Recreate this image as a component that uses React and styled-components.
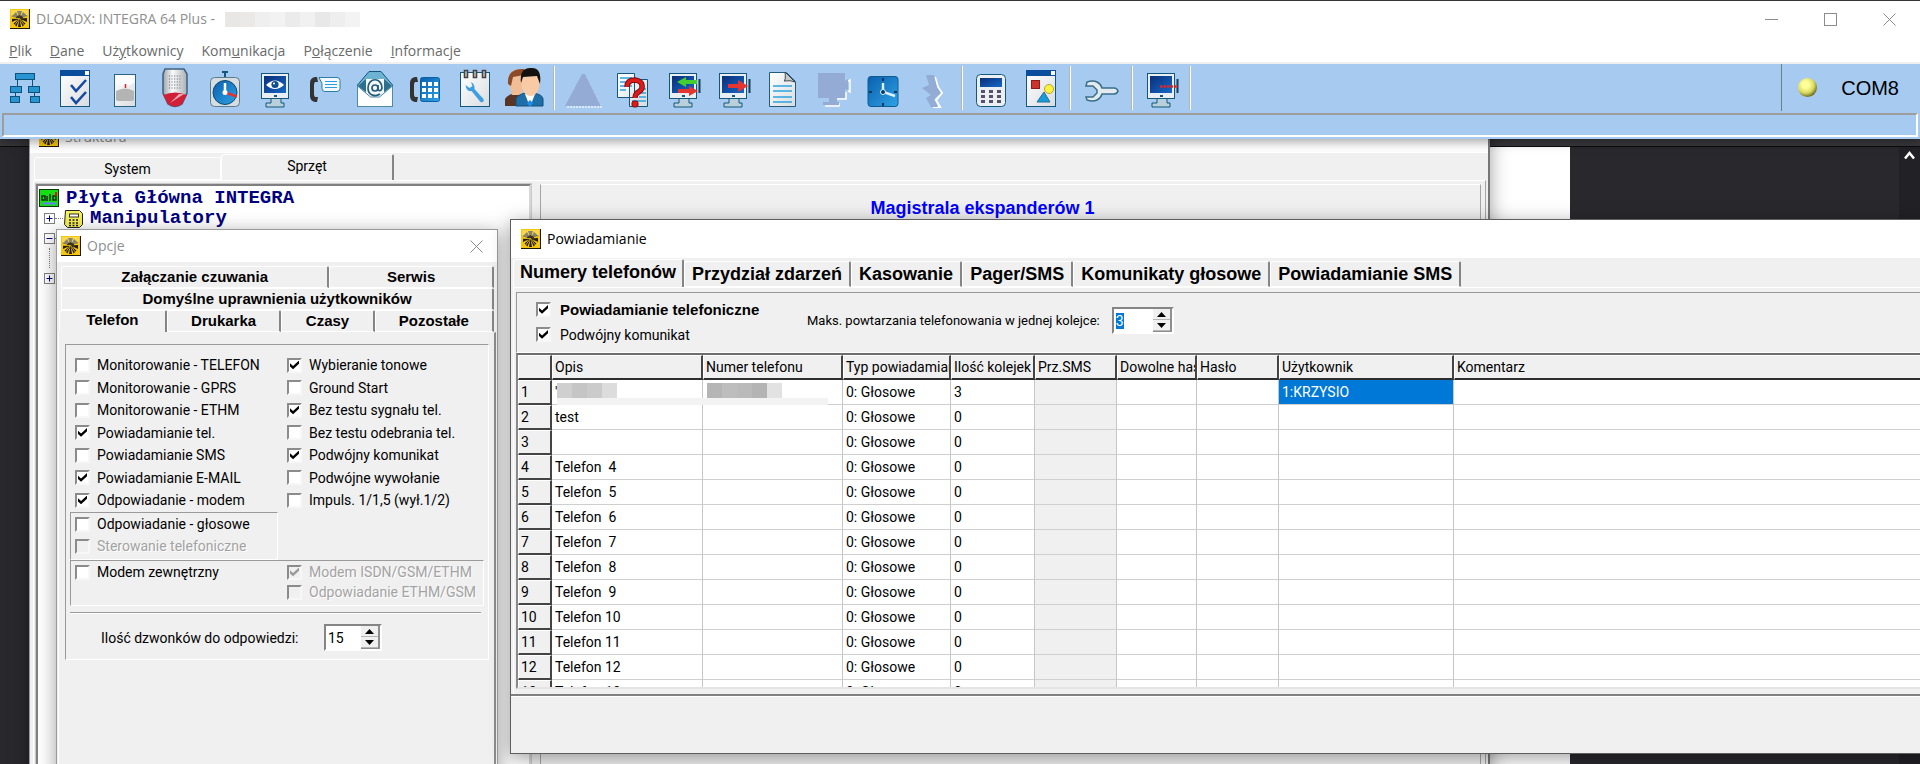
import React, { useState, useEffect, useRef } from "react";
import styled, { createGlobalStyle, css } from "styled-components";

const GlobalStyle = createGlobalStyle`
  * {
    box-sizing: border-box;
  }

  html, body, #root {
    height: 100%;
  }

  body {
    margin: 0;
    overflow: hidden;
    background: #29282d;
    color: #000;
    font: 14px/20px Roboto, "Liberation Sans", sans-serif;
  }

  button, input {
    font: inherit;
    color: inherit;
  }
`;

const uiFont = '"Open Sans", "Noto Sans", sans-serif';
const boldFont = '"Liberation Sans", Arial, sans-serif';

const sunken = css`
  border: 1px solid;
  border-color: #9a9a9a #fff #fff #9a9a9a;
`;

const Desktop = styled.div`
  position: relative;
  display: flex;
  flex-direction: column;
  height: 100%;
  overflow: hidden;
`;

/* main program bar */

const MainBar = styled.header`
  position: relative;
  z-index: 2;
  background: #fff;
  border-top: 1px solid #39343a;
  box-shadow: 0 3px 10px rgba(0, 0, 0, 0.35);
`;

const MainTitle = styled.div`
  display: flex;
  align-items: center;
  height: 36px;
  padding: 0 18px 0 10px;
  color: #8f8f8f;
  font: 14px/20px ${uiFont};
`;

const TitleText = styled.span`
  margin-left: 6px;
`;

const Mosaic = styled.span`
  display: inline-flex;
  flex: none;
  margin-left: ${(p) => p.$gap || 0}px;
`;

const MosaicBlock = styled.span`
  width: 15px;
  height: 15px;
  background: ${(p) => p.$color};
`;

const WindowButtons = styled.div`
  display: flex;
  gap: 34px;
  margin-left: auto;
`;

const GlyphButton = styled.button`
  display: flex;
  align-items: center;
  justify-content: center;
  width: 25px;
  height: 25px;
  padding: 0;
  border: 0;
  background: none;
`;

const Menu = styled.nav`
  display: flex;
  height: 27px;
  border-bottom: 2px solid #f0f0f0;
  font: 14px/28px ${uiFont};
`;

const MenuLink = styled.a`
  padding: 0 9px;
  color: #6a6a6a;
  text-decoration: none;
`;

const Toolbar = styled.div`
  display: flex;
  height: 49px;
  background: #a6caf0;
`;

const ToolButton = styled.button`
  display: flex;
  justify-content: center;
  width: ${(p) => (p.$wide ? 54 : 50)}px;
  height: 48px;
  padding: 0;
  border: 0;
  background: none;
`;

const ToolDivider = styled.span`
  width: 2px;
  height: 44px;
  margin: 2px 3px;
  background: #b5b5b5;
  border-right: 1px solid #fff;
`;

const PortPanel = styled.div`
  display: flex;
  align-items: center;
  gap: 24px;
  height: 47px;
  margin-left: auto;
  padding: 0 21px 0 16px;
  border-left: 1px solid #6f7f92;
  font: 20px/24px ${boldFont};
`;

const Lamp = styled.span`
  width: 19px;
  height: 19px;
  border-radius: 50%;
  background: radial-gradient(circle at 40% 35%, #ffff9a 20%, #d8d860 50%, #5c5c14 78%);
`;

const StatusBar = styled.div`
  height: 26px;
  padding: 0 2px 2px;
  background: #a6caf0;
`;

const StatusWell = styled.div`
  height: 24px;
  border: 2px solid;
  border-color: #9d9d9d #fff #fff #9d9d9d;
`;

/* dark editor behind the windows */

const Backdrop = styled.div`
  display: grid;
  grid-template-columns: 30px 1540px 1fr 21px;
  flex: 1;
  border-top: 7px solid #38373c;
`;

const BackdropCell = styled.div`
  border-top: 1px solid #0b0b0c;
  background: ${(p) => p.$color};
`;

const ScrollUp = styled.button`
  display: flex;
  justify-content: center;
  width: 21px;
  height: 21px;
  padding: 4px 0 0;
  border: 0;
  background: none;
`;

/* windows */

const Window = styled.section`
  position: absolute;
  display: flex;
  flex-direction: column;
  background: #f0f0f0;
  border: 1px solid ${(p) => p.$edge || "#9b9b9b"};
  box-shadow: 0 4px 18px rgba(0, 0, 0, 0.38);
`;

const StructureWindow = styled(Window)`
  top: 119px;
  left: 29px;
  right: 430px;
  bottom: -20px;
  border-right: 2px solid #777;
`;

const OptionsWindow = styled(Window)`
  top: 229px;
  left: 56px;
  width: 442px;
  bottom: -20px;
`;

const NotifyWindow = styled(Window)`
  top: 219px;
  left: 510px;
  right: -20px;
  bottom: 10px;
`;

const WindowTitle = styled.div`
  display: flex;
  align-items: center;
  flex: none;
  height: ${(p) => p.$height}px;
  padding: 0 ${(p) => p.$side + 4}px 0 ${(p) => p.$side}px;
  background: #fff;
  color: ${(p) => (p.$active ? "#000" : "#8f8f8f")};
  font: 14px/20px ${uiFont};
`;

const TabRow = styled.div`
  display: flex;
  flex: none;
  align-items: flex-end;
  padding: ${(p) => p.$pad || "0"};
`;

const Tab = styled.button`
  flex: ${(p) => (p.$span ? `${p.$span} 1 0` : "none")};
  height: ${(p) => p.$height || 22}px;
  padding: 0 ${(p) => p.$side || 0}px ${(p) => (p.$active ? 4 : 0)}px;
  border: 1px solid;
  border-width: 1px ${(p) => (p.$soft ? 1 : 2)}px ${(p) => (p.$active ? 0 : 1)}px 1px;
  border-color: #fff ${(p) => (p.$soft ? "#fff" : "#858585")} #fff #fff;
  border-radius: 3px 2px 0 0;
  background: #f0f0f0;
  font: ${(p) => p.$font};
  white-space: nowrap;
`;

const TabFill = styled.span`
  flex: 1100 1 0;
`;

const plainTab = "14px/18px Roboto, sans-serif";
const optionTab = `bold 15px/18px ${boldFont}`;
const notifyTab = `bold 18px/22px ${boldFont}`;

const StructurePage = styled.div`
  display: flex;
  flex: 1;
  gap: 9px;
  margin: 0 2px 0 3px;
  padding: 3px 4px 0 2px;
  border: 1px solid;
  border-color: #fff #a5a5a5 #fff #fff;
`;

const Tree = styled.div`
  width: 495px;
  padding: 2px 0 0 1px;
  background: #fff;
  border: 2px solid;
  border-color: #808080 #d8d8d8 #fff #808080;
  outline: 1px solid #c9c9c9;
  color: #000080;
  font: bold 19px/20px "Liberation Mono", "Courier New", monospace;
`;

const TreeRow = styled.div`
  display: flex;
  align-items: center;
  height: 20px;
  padding-left: ${(p) => (p.$root ? 0 : 5)}px;
`;

const TreeLabel = styled.span`
  margin-left: 7px;
`;

const TreeLink = styled.span`
  width: 8px;
  border-top: 1px dotted #808080;
`;

const TreeStem = styled.span`
  width: 9px;
  height: 20px;
  border-left: 1px dotted #808080;
  margin-left: 5px;
`;

const BusPanel = styled.div`
  flex: 1;
  padding-top: 12px;
  border: 1px solid;
  border-color: #fff #a5a5a5 #fff #a5a5a5;
  color: #0000ff;
  font: bold 18px/22px ${boldFont};
  text-align: center;
`;

const BusTitle = styled.h2`
  margin: 0 56px 0 0;
  font: inherit;
`;

/* options form */

const OptionsPage = styled.div`
  flex: 1;
  margin: 0 1px;
  padding: 11px 5px 0 6px;
  border: 1px solid;
  border-color: transparent #8c8c8c #fff #fff;
  border-right-width: 2px;
`;

const OptionsBox = styled.div`
  ${sunken}
  padding: 9px 4px 8px;
`;

const Columns = styled.div`
  display: grid;
  grid-template-columns: 212px 1fr;
  padding-left: 5px;
`;

const Column = styled.div`
  display: flex;
  flex-direction: column;
  justify-content: space-between;
  height: 157px;
`;

const Field = styled.label`
  display: flex;
  align-items: center;
  gap: ${(p) => p.$gap || 7}px;
  height: ${(p) => p.$height || 22}px;
  color: ${(p) => (p.$disabled ? "#a3a3a3" : "#000")};
  text-shadow: ${(p) => (p.$disabled ? "1px 1px 0 #fff" : "none")};
  font: ${(p) => (p.$bold ? `bold 15px/20px ${boldFont}` : "inherit")};
  white-space: nowrap;
`;

const Tick = styled.input.attrs({ type: "checkbox" })`
  appearance: none;
  flex: none;
  width: 15px;
  height: 15px;
  margin: 0;
  border: 2px solid;
  border-color: #8b8b8b #f7f7f7 #f7f7f7 #8b8b8b;
  background: #fff;

  &:disabled {
    background: #f0f0f0;
  }

  &:checked::before {
    content: "";
    display: block;
    width: 9px;
    height: 9px;
    margin: 1px;
    background: #000;
    clip-path: polygon(0 30%, 34% 62%, 100% 0, 100% 36%, 34% 98%, 0 66%);
  }

  &:checked:disabled::before {
    background: #9a9a9a;
  }
`;

const VoiceGroup = styled.div`
  ${sunken}
  width: 208px;
  height: 48px;
  margin-top: 1px;
  padding: 0 4px;
`;

const ModemGroup = styled.div`
  ${sunken}
  display: grid;
  grid-template-columns: 212px 1fr;
  height: 46px;
  padding: 0 4px;
`;

const Rule = styled.hr`
  height: 2px;
  margin: 6px 3px 10px 0;
  border: 0;
  border-top: 1px solid #9a9a9a;
  border-bottom: 1px solid #fff;
`;

const RingRow = styled.div`
  display: flex;
  align-items: center;
  justify-content: space-between;
  padding: 0 102px 0 31px;
`;

const SpinBox = styled.span`
  display: inline-flex;
  width: ${(p) => p.$width}px;
  height: 27px;
  border: 2px solid;
  border-color: #858585 #fff #fff #858585;
  background: #fff;
`;

const SpinInput = styled.input`
  flex: 1;
  min-width: 0;
  padding: 0 2px;
  border: 0;
  outline: 0;
  background: none;
  font-size: 14px;
  line-height: 16px;

  &::selection {
    background: #0078d7;
    color: #fff;
  }
`;

const SpinButtons = styled.span`
  display: flex;
  flex-direction: column;
  width: 19px;
  border-right: 2px solid #8f8f8f;
  border-bottom: 1px solid #8f8f8f;
`;

const SpinButton = styled.button`
  display: flex;
  align-items: center;
  justify-content: center;
  flex: 1;
  padding: 0;
  border: 0;
  border-bottom: 1px solid #b5b5b5;
  background: #f0f0f0;
`;

/* notification sheet */

const NotifyPage = styled.div`
  display: flex;
  flex-direction: column;
  flex: 1;
  min-height: 0;
  margin-left: 2px;
  padding: 4px 0 5px 2px;
  border-top: 1px solid #fff;
  border-left: 1px solid #fff;
`;

const NotifyTop = styled.div`
  ${sunken}
  display: flex;
  flex: none;
  align-items: flex-start;
  height: 61px;
  padding: 4px 19px 0;
`;

const NotifyChecks = styled.div`
  display: flex;
  flex-direction: column;
  width: 271px;
`;

const RepeatField = styled.label`
  display: flex;
  align-items: center;
  gap: 12px;
  margin-top: 10px;
  font-size: 13px;
  white-space: nowrap;
`;

const TableFrame = styled.div`
  flex: 1;
  min-height: 0;
  overflow: hidden;
  border: 2px solid;
  border-color: #6e6e6e #fff #e4e4e4 #8a8a8a;
  background: #fff;
`;

const PhoneTable = styled.table`
  width: 100%;
  table-layout: fixed;
  border-collapse: separate;
  border-spacing: 0;
`;

const HeadCell = styled.th`
  height: 25px;
  padding: 0 0 0 2px;
  overflow: hidden;
  background: #f0f0f0;
  border: 1px solid;
  border-width: 1px 2px 2px 1px;
  border-color: #fff #444 #2e2e2e #fff;
  font-weight: normal;
  line-height: 20px;
  text-align: left;
  white-space: nowrap;
`;

const RowHead = styled(HeadCell)`
  border-bottom-color: #444;
`;

const Cell = styled.td`
  position: relative;
  height: 25px;
  padding: 0 0 1px 3px;
  background: ${(p) => (p.$selected ? "#0078d7" : p.$locked ? "#f0f0f0" : "#fff")};
  color: ${(p) => (p.$selected ? "#fff" : "#000")};
  border-right: 1px solid #c6c6c6;
  border-bottom: 1px solid #cfcfcf;
  line-height: 20px;
  white-space: pre;
`;

const CellCover = styled.span`
  position: absolute;
  z-index: 1;
  top: 3px;
  left: ${(p) => p.$left}px;
  display: flex;
`;

const CoverStrip = styled.span`
  position: absolute;
  z-index: 1;
  top: 18px;
  left: 5px;
  width: 271px;
  height: 7px;
  background: #f3f3f3;
`;

const Footer = styled.footer`
  flex: none;
  height: 59px;
  border-top: 2px solid #808080;
  box-shadow: inset 0 1px 0 #fff;
`;

const AppLogo = () => (
  <svg width="20" height="20" viewBox="0 0 20 20">
    <rect width="20" height="20" fill="#1c1600" />
    <rect width="19" height="19" fill="#f6c50d" />
    <rect x="1" y="1" width="17" height="5" fill="#f9d84e" />
    <path d="M9.500 9.500L7 2h5zM9.500 9.500l-8-2L6 3zM9.500 9.500L13 3l4.500 4z" fill="#88826a" />
    <path d="M9.500 9.500L2 9v4zM9.500 9.500L17 9v4zM9.500 9.500l-6 5 3 3zM9.500 9.500l6 5-3 3zM9.500 9.500L8 18h3z" fill="#221d0c" />
    <path d="M6 8l3.500-2L13 8v3l-3.500 2L6 11z" fill="#3b3521" />
    <path d="M9.500 9.500L4 17M9.500 9.500l5.500 7.500M9.500 9.500H2" stroke="#f6c50d" strokeWidth=".8" />
  </svg>
);

const CloseGlyph = () => (
  <svg width="13" height="13" viewBox="0 0 13 13">
    <path d="M.5.5l12 12M12.500.5l-12 12" stroke="#8c8c8c" fill="none" />
  </svg>
);

// monitor body shared by several toolbar icons
const Monitor = ({ children }) => (
  <>
    <path d="M21 34h10v5h3v4H16v-4h5z" fill="#b9cfd9" stroke="#11587c" />
    <rect x="11.500" y="9.500" width="27" height="25" fill="#e8eef2" stroke="#11587c" />
    <rect x="14" y="12" width="22" height="17" fill="url(#screen)" />
    <path d="M24 32h3" stroke="#11587c" strokeWidth="2" />
    {children}
  </>
);

const Handset = () => (
  <path
    d="M17 13h-2q-5 1-5 6v13q0 5 5 6h2l1-5h-3q-1-1-1-3v-9q0-2 1-3h3z"
    fill="#333"
  />
);

const icons = {
  structure: (
    <g fill="#2795d2" stroke="#0d5278">
      <path d="M17.500 16v6M32.500 16v6M15.500 29v3M34.500 29v3" fill="none" />
      <rect x="15.500" y="9.500" width="19" height="6" />
      <rect x="10.500" y="22.500" width="11" height="6" />
      <rect x="28.500" y="22.500" width="11" height="6" />
      <rect x="10.500" y="32.500" width="9" height="6" />
      <rect x="30.500" y="32.500" width="9" height="6" />
    </g>
  ),
  checklist: (
    <>
      <rect x="10.500" y="6.500" width="29" height="36" fill="url(#paper)" stroke="#11587c" />
      <rect x="10" y="6" width="30" height="6" fill="#0a4d9c" />
      <path d="M35 7h4v4h-4z" fill="#fff" />
      <path d="M21 21l5 6 10-11M21 33l5 6 10-11" fill="none" stroke="#1449a6" strokeWidth="2.600" />
    </>
  ),
  detector: (
    <>
      <rect x="14.500" y="10.500" width="21" height="32" fill="url(#paper)" stroke="#256482" />
      <path d="M15 18q10 8 20 0v-7H15z" fill="#fbfbfb" />
      <path d="M16 27q9-5 18 0v8q0 2-3 2H19q-3 0-3-2z" fill="#b4b4b4" />
      <path d="M25.500 20v4" stroke="#e02020" strokeWidth="1.500" />
    </>
  ),
  siren: (
    <>
      <path d="M15 5h19l3 5v19l-5 11q-7 5-14 0l-5-11V10z" fill="url(#metal)" stroke="#3e6184" strokeWidth="1.500" />
      <path d="M13 31q12-5 24 0l-5 9q-7 5-14 0z" fill="#cf2038" />
      <path d="M20 39l9-9h5z" fill="#f3a8b4" />
      <path d="M19 12h12M19 15h12M19 18h12M19 21h12M19 24h12" stroke="#5d6b78" strokeDasharray="1 1.600" />
    </>
  ),
  timer: (
    <>
      <path d="M22 8h6M25 8v6" stroke="#11587c" strokeWidth="2" />
      <rect x="10.500" y="13.500" width="29" height="29" rx="4" fill="#d5dde0" stroke="#5d7c8c" />
      <circle cx="25" cy="28.500" r="12" fill="url(#dial)" stroke="#0b4a75" />
      <path d="M25 28V19" stroke="#fff" strokeWidth="2.500" />
      <path d="M25 28.500l12 4" stroke="#e03434" strokeWidth="2.500" />
      <circle cx="25" cy="28.500" r="2.500" fill="#fff" />
    </>
  ),
  monitorView: (
    <Monitor>
      <path d="M16 21q9-9 18 0-9 8-18 0z" fill="#fff" />
      <circle cx="25" cy="20.500" r="3.600" fill="#0d4f93" />
      <circle cx="24" cy="19.500" r="1" fill="#fff" />
    </Monitor>
  ),
  phoneMessage: (
    <>
      <Handset />
      <path d="M19 13.500h18q3 0 3 3v8q0 3-3 3H25q-3 0-3-3v-5z" fill="#f3faff" stroke="#2c7ea8" />
      <path d="M25 17.500h12M25 20.500h12M25 23.500h12" stroke="#2d9cdb" />
    </>
  ),
  mail: (
    <>
      <path d="M7.500 21L19 7.500h12L42.500 21v21.500h-35z" fill="#6db2d0" stroke="#11587c" />
      <path d="M8 22l8-7v13zM42 22l-8-7v13z" fill="#2f6f8e" />
      <path d="M16 15h18v18H16z" fill="#f4f7f9" />
      <path d="M7.500 22l13 11h9l13-11v20.500h-35z" fill="#fff" stroke="#4f8aa5" />
      <circle cx="25" cy="24" r="3" fill="none" stroke="#255d79" strokeWidth="1.700" />
      <path d="M28 21v5q3 2 4-2c0-11-14-11-14 0 0 8 8 9 12 6" fill="none" stroke="#255d79" strokeWidth="1.700" />
    </>
  ),
  phonePad: (
    <>
      <Handset />
      <rect x="20.500" y="13.500" width="19" height="24" rx="2" fill="url(#dial)" stroke="#0c62a0" />
      <path d="M22 18h4v4h-4zM28 18h4v4h-4zM34 18h4v4h-4zM22 24h4v4h-4zM28 24h4v4h-4zM34 24h4v4h-4zM22 30h4v4h-4zM28 30h4v4h-4zM34 30h4v4h-4z" fill="#fff" />
    </>
  ),
  service: (
    <>
      <rect x="10.500" y="8.500" width="29" height="34" fill="url(#paper)" stroke="#11587c" />
      <path d="M14.500 6.500h3v7h-3zM23.500 6.500h3v7h-3zM32.500 6.500h3v7h-3z" fill="#ccc" stroke="#444" strokeWidth="1.600" />
      <path d="M21 18q4 2 3.500 7l9 10q1 4-3 3l-9-11q-5 1-6-6l4 3 3-2z" fill="#3e9fe0" />
    </>
  ),
  users: (
    <>
      <path d="M5 42V35q1-3 7-5h8v12z" fill="#5a3524" />
      <path d="M9 13q1-9 13-8v26H12q-3-9-3-18z" fill="#f0bd97" />
      <path d="M8 20q-1-16 16-15v6l-11 2-2 9z" fill="#8c4a28" />
      <path d="M16 42v-7q1-4 9-6h9q9 2 9 6v7z" fill="#1e6fa9" stroke="#174f78" />
      <path d="M25 30h10l-5 13z" fill="#fff" />
      <path d="M30 36l3 3-3 4-3-4z" fill="#1f8ce8" />
      <ellipse cx="30.500" cy="20" rx="9" ry="12" fill="#f8cba5" />
      <path d="M21 19q-2-16 11-15 10 0 8 16l-3-8-14 1z" fill="#14110f" />
    </>
  ),
  report: (
    <>
      <path d="M9.500 9.500h17v24h-17zM21.500 15.500h18v27h-18z" fill="url(#paper)" stroke="#11587c" />
      <path d="M12 14h12M12 18h12M12 22h12M12 26h6M31 25h7M31 29h7M31 33h7M24 37h14" stroke="#2ba4df" strokeWidth="1.500" />
      <path d="M19 23q0-7 8-7 8 1 7 8-1 3-5 5-2 2-2 5" fill="none" stroke="#7c0d10" strokeWidth="5.500" />
      <path d="M19 23q0-7 8-7 8 1 7 8-1 3-5 5-2 2-2 5" fill="none" stroke="#dc1b1b" strokeWidth="3.600" />
      <rect x="24" y="37" width="6" height="6" rx="2" fill="#dc1b1b" stroke="#7c0d10" />
    </>
  ),
  alert: (
    <>
      <path d="M26 10l17 33H8" fill="none" stroke="#eef4fb" strokeWidth="1.500" strokeDasharray="2 1" />
      <path d="M24 10h3l16 32H7z" fill="#93abd5" />
    </>
  ),
  readWrite: (
    <Monitor>
      <path d="M41.500 15v14" stroke="#173f58" strokeWidth="2" />
      <path d="M19 18l9-5v3h11v4H28v3z" fill="#44cf30" />
      <path d="M40 27l-9-5v3H20v4h11v3z" fill="#e5352f" />
    </Monitor>
  ),
  write: (
    <Monitor>
      <path d="M41.500 15v14" stroke="#173f58" strokeWidth="2" />
      <path d="M40 22l-10-6v4H20v4h10v4z" fill="#e5352f" />
    </Monitor>
  ),
  document: (
    <>
      <path d="M11.500 8.500h17l9 9v25h-26z" fill="url(#paper)" stroke="#245d7c" />
      <path d="M27 8q1 8-1 9 7-1 11 1z" fill="#c9c9c9" stroke="#3c4a54" />
      <path d="M15 22h19M15 27h19M15 33h19M15 38h19" stroke="#2ba4df" strokeWidth="1.600" />
    </>
  ),
  monitorOff: (
    <>
      <path d="M39 18l3-2v12l-3-2M38 28v7H27M31 39v3H17" fill="none" stroke="#fff" strokeWidth="1.500" />
      <path d="M10 9h27v8l3-2v12l-3-2v9h-8v4h2v3H15v-3h6v-4H10z" fill="#93abd5" />
    </>
  ),
  clock: (
    <>
      <rect x="10" y="12.500" width="30" height="30" rx="3" fill="url(#dial)" stroke="#0c5c92" />
      <path d="M25 14v3M25 39v3M11 28h3M36 28h3" stroke="#08375e" strokeWidth="2" />
      <path d="M25 19v9l12 4" fill="none" stroke="#dff2ff" strokeWidth="2.400" />
      <circle cx="25" cy="28" r="2.500" fill="#08375e" stroke="#dff2ff" />
    </>
  ),
  flash: (
    <>
      <path d="M27 13l3 10 4 6-6 7 4 7h-7" fill="none" stroke="#fff" strokeWidth="2" />
      <path d="M18 11h8l3 12 4 6-7 6 4 8h-7l-5-9 5-3-9-7 7-3z" fill="#93abd5" />
    </>
  ),
  calculator: (
    <>
      <rect x="10.500" y="10.500" width="29" height="32" rx="4" fill="#eceff1" stroke="#11587c" />
      <rect x="14" y="14" width="22" height="9" fill="url(#screen)" />
      <path d="M15 27.500h20M15 32.500h20M15 37.500h20" stroke="#56506b" strokeWidth="3" strokeDasharray="4 4" />
    </>
  ),
  shapes: (
    <>
      <rect x="10.500" y="6.500" width="29" height="36" fill="url(#paper)" stroke="#11587c" />
      <rect x="10" y="6" width="30" height="6" fill="#0a4d9c" />
      <path d="M35 7h4v4h-4z" fill="#fff" />
      <rect x="15.500" y="16.500" width="8" height="8" fill="#cf3428" stroke="#8b1d1a" />
      <circle cx="33" cy="25" r="4.500" fill="#fff23c" stroke="#b9a62d" />
      <path d="M28 28l6 10H21z" fill="#199bd8" stroke="#2270a0" />
    </>
  ),
  wrench: (
    <path
      d="M11 18q6-2 10 0 4 2 5 6h12q3 0 4 3-1 3-4 3H26q-1 4-5 6-4 2-10 0l-1-3h7l4-4v-3l-4-4h-7z"
      fill="#e3ebee"
      stroke="#386f89"
      strokeWidth="1.500"
    />
  ),
  disconnect: (
    <Monitor>
      <path d="M41.500 15v14" stroke="#173f58" strokeWidth="2" />
      <path d="M24 22.500h18" stroke="#e22424" strokeWidth="2.500" strokeDasharray="2.500 1" />
    </Monitor>
  ),
};

const toolGroups = [
  [
    ["structure", "Struktura"],
    ["checklist", "Opcje"],
    ["detector", "Wejścia"],
    ["siren", "Wyjścia"],
    ["timer", "Timery"],
    ["monitorView", "Monitorowanie"],
    ["phoneMessage", "Powiadamianie"],
    ["mail", "E-mail"],
    ["phonePad", "Sterowanie"],
    ["service", "Serwis"],
    ["users", "Użytkownicy"],
  ],
  [
    ["alert", "Awarie"],
    ["report", "Zdarzenia"],
    ["readWrite", "Odczyt"],
    ["write", "Zapis"],
    ["document", "Opis"],
    ["monitorOff", "Podgląd"],
    ["clock", "Zegar"],
    ["flash", "Reset"],
  ],
  [
    ["calculator", "Manipulator"],
    ["shapes", "Stan"],
  ],
  [["wrench", "Konfiguracja"]],
  [["disconnect", "Rozłącz"]],
];

// text before the mnemonic, the mnemonic, the rest
const menuItems = [
  ["", "P", "lik"],
  ["", "D", "ane"],
  ["Uż", "y", "tkownicy"],
  ["Kom", "u", "nikacja"],
  ["P", "o", "łączenie"],
  ["", "I", "nformacje"],
];

const leftOptions = [
  ["Monitorowanie - TELEFON", false],
  ["Monitorowanie - GPRS", false],
  ["Monitorowanie - ETHM", false],
  ["Powiadamianie tel.", true],
  ["Powiadamianie SMS", false],
  ["Powiadamianie E-MAIL", true],
  ["Odpowiadanie - modem", true],
];

const rightOptions = [
  ["Wybieranie tonowe", true],
  ["Ground Start", false],
  ["Bez testu sygnału tel.", true],
  ["Bez testu odebrania tel.", false],
  ["Podwójny komunikat", true],
  ["Podwójne wywołanie", false],
  ["Impuls. 1/1,5 (wył.1/2)", false],
];

const tableColumns = [
  ["", 34],
  ["Opis", 151],
  ["Numer telefonu", 140],
  ["Typ powiadamiania", 108],
  ["Ilość kolejek", 84],
  ["Prz.SMS", 82],
  ["Dowolne hasło", 80],
  ["Hasło", 82],
  ["Użytkownik", 175],
  ["Komentarz", null],
];

const phoneRows = Array.from({ length: 13 }, (_, i) => {
  const nr = i + 1;
  let name = `Telefon ${nr < 10 ? " " : ""}${nr}`;
  if (nr === 1) name = "'";
  if (nr === 2) name = "test";
  if (nr === 3) name = "";
  return { nr, name, count: nr === 1 ? 3 : 0, user: nr === 1 ? "1:KRZYSIO" : "" };
});

const notifyTabs = [
  "Numery telefonów",
  "Przydział zdarzeń",
  "Kasowanie",
  "Pager/SMS",
  "Komunikaty głosowe",
  "Powiadamianie SMS",
];

const Blocks = ({ colors }) =>
  colors.map((color, index) => <MosaicBlock key={index} $color={color} />);

const CheckField = ({ text, checked, disabled, ...rest }) => (
  <Field $disabled={disabled} {...rest}>
    <Tick defaultChecked={checked} disabled={disabled} />
    {text}
  </Field>
);

const Spin = ({ id, start, width, selected }) => {
  const [value, setValue] = useState(start);
  const inputRef = useRef(null);

  useEffect(() => {
    if (selected) {
      inputRef.current.focus();
      inputRef.current.select();
    }
  }, [selected]);

  return (
    <SpinBox $width={width}>
      <SpinInput
        id={id}
        ref={inputRef}
        value={value}
        onChange={(e) => setValue(Number(e.target.value) || 0)}
      />
      <SpinButtons>
        <SpinButton aria-label="Więcej" onClick={() => setValue(value + 1)}>
          <svg width="9" height="5" viewBox="0 0 9 5">
            <path d="M4.500 0L9 5H0z" />
          </svg>
        </SpinButton>
        <SpinButton aria-label="Mniej" onClick={() => setValue(value - 1)}>
          <svg width="9" height="5" viewBox="0 0 9 5">
            <path d="M4.500 5L9 0H0z" />
          </svg>
        </SpinButton>
      </SpinButtons>
    </SpinBox>
  );
};

const Expander = ({ open }) => (
  <svg width="11" height="11" viewBox="0 0 11 11">
    <rect x=".5" y=".5" width="10" height="10" fill="#fff" stroke="#808080" />
    <path d={open ? "M2.500 5.500h6" : "M2.500 5.500h6M5.500 2.500v6"} stroke="#000080" />
  </svg>
);

const Header = () => (
  <MainBar>
    <MainTitle>
      <AppLogo />
      <TitleText>DLOADX: INTEGRA 64 Plus -</TitleText>
      <Mosaic $gap={10}>
        <Blocks
          colors={["#e8e7e6", "#eae9e8", "#f0efef", "#f3f2f2", "#ebebeb", "#f1f1f1", "#e8e8e8", "#eeeeee", "#f3f3f3"]}
        />
      </Mosaic>
      <WindowButtons>
        <GlyphButton aria-label="Minimalizuj">
          <svg width="13" height="13" viewBox="0 0 13 13">
            <path d="M0 6.500h13" stroke="#8c8c8c" />
          </svg>
        </GlyphButton>
        <GlyphButton aria-label="Maksymalizuj">
          <svg width="13" height="13" viewBox="0 0 13 13">
            <rect x=".5" y=".5" width="12" height="12" fill="none" stroke="#8c8c8c" />
          </svg>
        </GlyphButton>
        <GlyphButton aria-label="Zamknij">
          <CloseGlyph />
        </GlyphButton>
      </WindowButtons>
    </MainTitle>
    <Menu>
      {menuItems.map(([before, key, after]) => (
        <MenuLink href="#" key={after}>
          {before}
          <u>{key}</u>
          {after}
        </MenuLink>
      ))}
    </Menu>
    <Toolbar>
      {toolGroups.map((group, index) => (
        <React.Fragment key={index}>
          {group.map(([name, label]) => (
            <ToolButton key={name} aria-label={label} $wide={name === "wrench"}>
              <svg width="50" height="48" viewBox="0 0 50 48">
                {icons[name]}
              </svg>
            </ToolButton>
          ))}
          <ToolDivider />
        </React.Fragment>
      ))}
      <PortPanel>
        <Lamp />
        COM8
      </PortPanel>
    </Toolbar>
    <StatusBar>
      <StatusWell />
    </StatusBar>
  </MainBar>
);

const Structure = () => (
  <StructureWindow>
    <WindowTitle $height={33} $side={9}>
      <AppLogo />
      <TitleText>Struktura</TitleText>
    </WindowTitle>
    <TabRow $pad="1px 0 0 4px">
      <Tab $soft $span={186} $height={23} $font={plainTab}>System</Tab>
      <Tab $active $span={171} $height={26} $font={plainTab}>Sprzęt</Tab>
      <TabFill />
    </TabRow>
    <StructurePage>
      <Tree>
        <TreeRow $root>
          <svg width="20" height="18" viewBox="0 0 20 18">
            <rect x=".5" y=".5" width="19" height="17" fill="#14e014" stroke="#0a3a0a" />
            <path d="M3 7h3v4H3zM8 7v5M11 5v7M14 7h3v4h-3z" fill="none" stroke="#1b2d1b" strokeWidth="1.500" />
            <path d="M17 3v4" stroke="#e01010" strokeWidth="2" />
            <path d="M4 14.500h13" stroke="#6a7cff" strokeWidth="2" />
          </svg>
          <TreeLabel>Płyta Główna INTEGRA</TreeLabel>
        </TreeRow>
        <TreeRow>
          <Expander />
          <TreeLink />
          <svg width="20" height="19" viewBox="0 0 20 19">
            <path d="M2.500 1.500h14l3 3v11l-3 3h-12l-3-3z" fill="#f4ee58" stroke="#222" />
            <rect x="6.500" y="5" width="9" height="3" fill="#fff" stroke="#333" />
            <path d="M6 11h10M6 14h10M6 16.500h10" stroke="#222" strokeWidth="1.500" strokeDasharray="2 1.500" />
          </svg>
          <TreeLabel>Manipulatory</TreeLabel>
        </TreeRow>
        <TreeRow>
          <Expander open />
          <TreeLink />
          <svg width="20" height="18" viewBox="0 0 20 18">
            <path d="M1 1h5v3H1z" fill="#e01010" />
            <path d="M13 1h6v3h-6z" fill="#1d6b1d" />
          </svg>
        </TreeRow>
        <TreeRow>
          <TreeStem />
        </TreeRow>
        <TreeRow>
          <Expander />
        </TreeRow>
      </Tree>
      <BusPanel>
        <BusTitle>Magistrala ekspanderów 1</BusTitle>
      </BusPanel>
    </StructurePage>
  </StructureWindow>
);

const Options = () => (
  <OptionsWindow>
    <WindowTitle $height={32} $side={4}>
      <AppLogo />
      <TitleText>Opcje</TitleText>
      <WindowButtons>
        <GlyphButton aria-label="Zamknij opcje">
          <CloseGlyph />
        </GlyphButton>
      </WindowButtons>
    </WindowTitle>
    <TabRow $pad="4px 3px 0 4px">
      <Tab $span={269} $font={optionTab}>Załączanie czuwania</Tab>
      <Tab $span={164} $font={optionTab}>Serwis</Tab>
    </TabRow>
    <TabRow $pad="0 3px 0 4px">
      <Tab $span={1} $font={optionTab}>Domyślne uprawnienia użytkowników</Tab>
    </TabRow>
    <TabRow $pad="0 3px 0 2px">
      <Tab $active $span={108} $font={optionTab}>Telefon</Tab>
      <Tab $span={115} $font={optionTab}>Drukarka</Tab>
      <Tab $span={93} $font={optionTab}>Czasy</Tab>
      <Tab $span={120} $font={optionTab}>Pozostałe</Tab>
    </TabRow>
    <OptionsPage>
      <OptionsBox>
        <Columns>
          <Column>
            {leftOptions.map(([text, checked]) => (
              <CheckField key={text} text={text} checked={checked} />
            ))}
          </Column>
          <Column>
            {rightOptions.map(([text, checked]) => (
              <CheckField key={text} text={text} checked={checked} />
            ))}
          </Column>
        </Columns>
        <VoiceGroup>
          <CheckField text="Odpowiadanie - głosowe" />
          <CheckField text="Sterowanie telefoniczne" disabled />
        </VoiceGroup>
        <ModemGroup>
          <CheckField text="Modem zewnętrzny" />
          <div>
            <CheckField text="Modem ISDN/GSM/ETHM" checked disabled />
            <CheckField text="Odpowiadanie ETHM/GSM" disabled $height={18} />
          </div>
        </ModemGroup>
        <Rule />
        <RingRow>
          <label htmlFor="rings">Ilość dzwonków do odpowiedzi:</label>
          <Spin id="rings" start={15} width={58} />
        </RingRow>
      </OptionsBox>
    </OptionsPage>
  </OptionsWindow>
);

const PhoneSheet = () => (
  <TableFrame>
    <PhoneTable>
      <colgroup>
        {tableColumns.map(([title, width]) => (
          <col key={title} width={width || undefined} />
        ))}
      </colgroup>
      <thead>
        <tr>
          {tableColumns.map(([title]) => (
            <HeadCell key={title}>{title}</HeadCell>
          ))}
        </tr>
      </thead>
      <tbody>
        {phoneRows.map(({ nr, name, count, user }) => (
          <tr key={nr}>
            <RowHead>{nr}</RowHead>
            <Cell>
              {name}
              {nr === 1 && (
                <>
                  <CellCover $left={5}>
                    <Blocks colors={["#cfcfcf", "#c5c5c5", "#cbcbcb", "#dcdcdc"]} />
                  </CellCover>
                  <CoverStrip />
                </>
              )}
            </Cell>
            <Cell>
              {nr === 1 && (
                <CellCover $left={4}>
                  <Blocks colors={["#b5b5b5", "#bdbdbd", "#bababa", "#b4b4b4", "#e2e2e2"]} />
                </CellCover>
              )}
            </Cell>
            <Cell>0: Głosowe</Cell>
            <Cell>{count}</Cell>
            <Cell $locked />
            <Cell />
            <Cell />
            <Cell $selected={Boolean(user)}>{user}</Cell>
            <Cell />
          </tr>
        ))}
      </tbody>
    </PhoneTable>
  </TableFrame>
);

const Notifications = () => (
  <NotifyWindow $edge="#5e5e5e">
    <WindowTitle $active $height={38} $side={10}>
      <AppLogo />
      <TitleText>Powiadamianie</TitleText>
    </WindowTitle>
    <TabRow $pad="1px 0 0 2px">
      {notifyTabs.map((text, index) => (
        <Tab
          key={text}
          $active={index === 0}
          $height={index === 0 ? 28 : 26}
          $side={index === 0 ? 6 : 7}
          $font={notifyTab}
        >
          {text}
        </Tab>
      ))}
    </TabRow>
    <NotifyPage>
      <NotifyTop>
        <NotifyChecks>
          <CheckField text="Powiadamianie telefoniczne" checked $bold $gap={9} $height={25} />
          <CheckField text="Podwójny komunikat" checked $gap={9} $height={25} />
        </NotifyChecks>
        <RepeatField htmlFor="repeats">
          Maks. powtarzania telefonowania w jednej kolejce:
          <Spin id="repeats" start={3} width={62} selected />
        </RepeatField>
      </NotifyTop>
      <PhoneSheet />
    </NotifyPage>
    <Footer />
  </NotifyWindow>
);

// gradients used by the toolbar drawings
const Gradients = styled.svg`
  position: absolute;
`;

const App = () => {
  return (
    <Desktop>
      <GlobalStyle />
      <Gradients width="0" height="0">
        <defs>
          <linearGradient id="paper" x1="0" y1="0" x2="1" y2="1">
            <stop offset="0" stopColor="#fff" />
            <stop offset="1" stopColor="#d9dcdf" />
          </linearGradient>
          <linearGradient id="metal" x1="0" y1="0" x2="1" y2="0">
            <stop offset="0" stopColor="#9da3a8" />
            <stop offset="0.4" stopColor="#fafafa" />
            <stop offset="1" stopColor="#a9afb4" />
          </linearGradient>
          <linearGradient id="screen" x1="0" y1="0" x2="1" y2="1">
            <stop offset="0" stopColor="#0b2f78" />
            <stop offset="1" stopColor="#1668c8" />
          </linearGradient>
          <linearGradient id="dial" x1="0" y1="0" x2="1" y2="1">
            <stop offset="0" stopColor="#0a5fae" />
            <stop offset="1" stopColor="#2fa3e6" />
          </linearGradient>
        </defs>
      </Gradients>
      <Header />
      <Backdrop>
        <BackdropCell $color="#29282d" />
        <BackdropCell $color="#fff" />
        <BackdropCell $color="#29282d" />
        <BackdropCell $color="#222126">
          <ScrollUp aria-label="Przewiń w górę">
            <svg width="11" height="9" viewBox="0 0 11 9">
              <path d="M1 7.500L5.500 2 10 7.500" fill="none" stroke="#fff" strokeWidth="2.500" />
            </svg>
          </ScrollUp>
        </BackdropCell>
      </Backdrop>
      <Structure />
      <Options />
      <Notifications />
    </Desktop>
  );
};

export default App;
